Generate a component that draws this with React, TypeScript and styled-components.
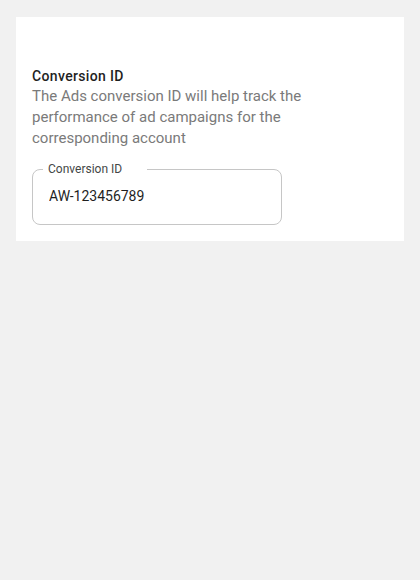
import React from "react";
import styled, { createGlobalStyle } from "styled-components";

const Global = createGlobalStyle`
  html, body { margin: 0; padding: 0; background: #f1f1f1; }
  body { font-family: Roboto, "Noto Sans", Arial, sans-serif; }
  * { box-sizing: border-box; }
`;

const Page = styled.div`
  padding: 17px 16px;
`;

const Card = styled.section`
  background: #ffffff;
  padding: 49px 16px 16px;
  display: flex;
  flex-direction: column;
`;

const Title = styled.h2`
  margin: 0;
  font-size: 14px;
  line-height: 20px;
  font-weight: 500;
  letter-spacing: 0.35px;
  color: #1f1f1f;
`;

const Description = styled.p`
  margin: 0;
  width: 280px;
  font-size: 15px;
  line-height: 21px;
  color: #7a7a7a;
`;

const Field = styled.fieldset`
  margin: 12px 0 0;
  width: 250px;
  border: 1px solid #c6c6c6;
  border-radius: 8px;
  padding: 0 16px 18px;
  min-inline-size: 0;
`;

const Legend = styled.legend`
  margin-left: -6px;
  padding: 0 25px 0 5px;
  font-size: 12px;
  line-height: 16px;
  color: #444746;
`;

const Input = styled.input`
  display: block;
  width: 100%;
  margin-top: 9px;
  height: 20px;
  border: none;
  outline: none;
  padding: 0;
  font-family: inherit;
  font-size: 14px;
  color: #1f1f1f;
  background: transparent;
`;

export default function App() {
  return (
    <>
      <Global />
      <Page>
        <Card>
          <Title>Conversion ID</Title>
          <Description>
            The Ads conversion ID will help track the performance of ad campaigns for the
            corresponding account
          </Description>
          <Field>
            <Legend>Conversion ID</Legend>
            <Input defaultValue="AW-123456789" readOnly />
          </Field>
        </Card>
      </Page>
    </>
  );
}
